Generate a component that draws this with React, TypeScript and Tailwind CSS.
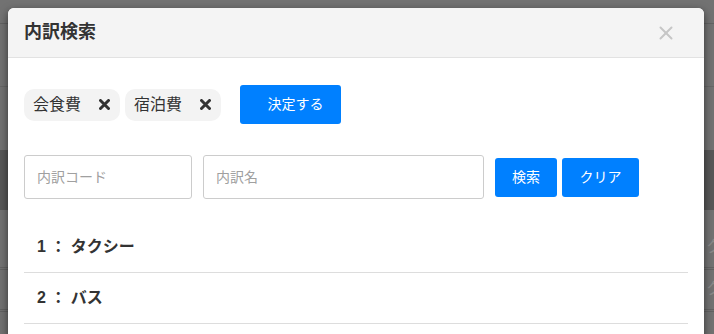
import { X } from "lucide-react";

const font = { fontFamily: '"Liberation Sans", "Noto Sans CJK JP", sans-serif' };

function Tag({ label }: { label: string }) {
  return (
    <div className="flex h-[32px] w-[96px] items-center justify-between rounded-[10px] bg-[#f3f3f3] pl-[9px] pr-[10px] text-[16px] text-[#333]">
      <span>{label}</span>
      <svg width="11" height="11" viewBox="0 0 11 11">
        <path d="M1.5 1.5 L9.5 9.5 M9.5 1.5 L1.5 9.5" stroke="#333" strokeWidth="3" strokeLinecap="round" />
      </svg>
    </div>
  );
}

export default function App() {
  const items = ["タクシー", "バス"];
  return (
    <div className="relative h-[334px] w-[714px] overflow-hidden bg-[#727272]" style={font}>
      {/* dimmed page behind the dialog */}
      <div className="flex w-[800px] flex-col">
        <div className="h-[24px] border-b border-[#626262]" />
        <div className="h-[63px] border-b border-[#666]" />
        <div className="h-[63px]" />
        <div className="h-[60px] bg-[#575757]" />
        <div className="flex h-[60px] items-end whitespace-nowrap border-b-[3px] border-double border-[#626262] pl-[706px] pb-[8px] text-[16px] text-[#8a8a8a]">
          クリア
        </div>
        <div className="flex h-[42px] items-end whitespace-nowrap border-b-[3px] border-double border-[#626262] pl-[706px] pb-[8px] text-[16px] text-[#8a8a8a]">
          クリア
        </div>
      </div>

      {/* dialog */}
      <div className="absolute left-[8px] top-[8px] h-[340px] w-[696px] overflow-hidden rounded-t-[6px] bg-white shadow-[0_3px_9px_rgba(0,0,0,0.55)]">
        <div className="flex h-[50px] items-center justify-between border-b border-[#e2e2e2] bg-[#f4f4f4] pl-[16px] pr-[27px]">
          <h2 className="text-[18px] font-bold text-[#333]">内訳検索</h2>
          <X size={22} strokeWidth={2.2} className="text-[#c6c6c6]" />
        </div>

        <div className="px-[16px]">
          <div className="mt-[27px] flex items-center">
            <div className="flex gap-[5px]">
              <Tag label="会食費" />
              <Tag label="宿泊費" />
            </div>
            <button className="ml-[19px] h-[39px] w-[101px] rounded-[3px] bg-[#0080ff] pl-[10px] text-[14px] text-white">
              決定する
            </button>
          </div>

          <div className="mt-[31px] flex items-center">
            <input
              placeholder="内訳コード"
              className="h-[44px] w-[168px] rounded-[3px] border border-[#cccccc] px-[12px] text-[14px] placeholder:text-[#a0a0a0]"
            />
            <input
              placeholder="内訳名"
              className="ml-[11px] h-[44px] w-[281px] rounded-[3px] border border-[#cccccc] px-[12px] text-[14px] placeholder:text-[#a0a0a0]"
            />
            <button className="ml-[11px] h-[39px] w-[62px] rounded-[3px] bg-[#0080ff] text-[14px] text-white">
              検索
            </button>
            <button className="ml-[5px] h-[39px] w-[77px] rounded-[3px] bg-[#0080ff] text-[14px] text-white">
              クリア
            </button>
          </div>

          <ul className="mt-[23px]">
            {items.map((name, i) => (
              <li
                key={name}
                className="flex h-[51px] items-center border-b border-[#dddddd] pl-[13px] text-[16px] font-bold text-[#333]"
              >
                {i + 1} ： {name}
              </li>
            ))}
          </ul>
        </div>
      </div>
    </div>
  );
}
